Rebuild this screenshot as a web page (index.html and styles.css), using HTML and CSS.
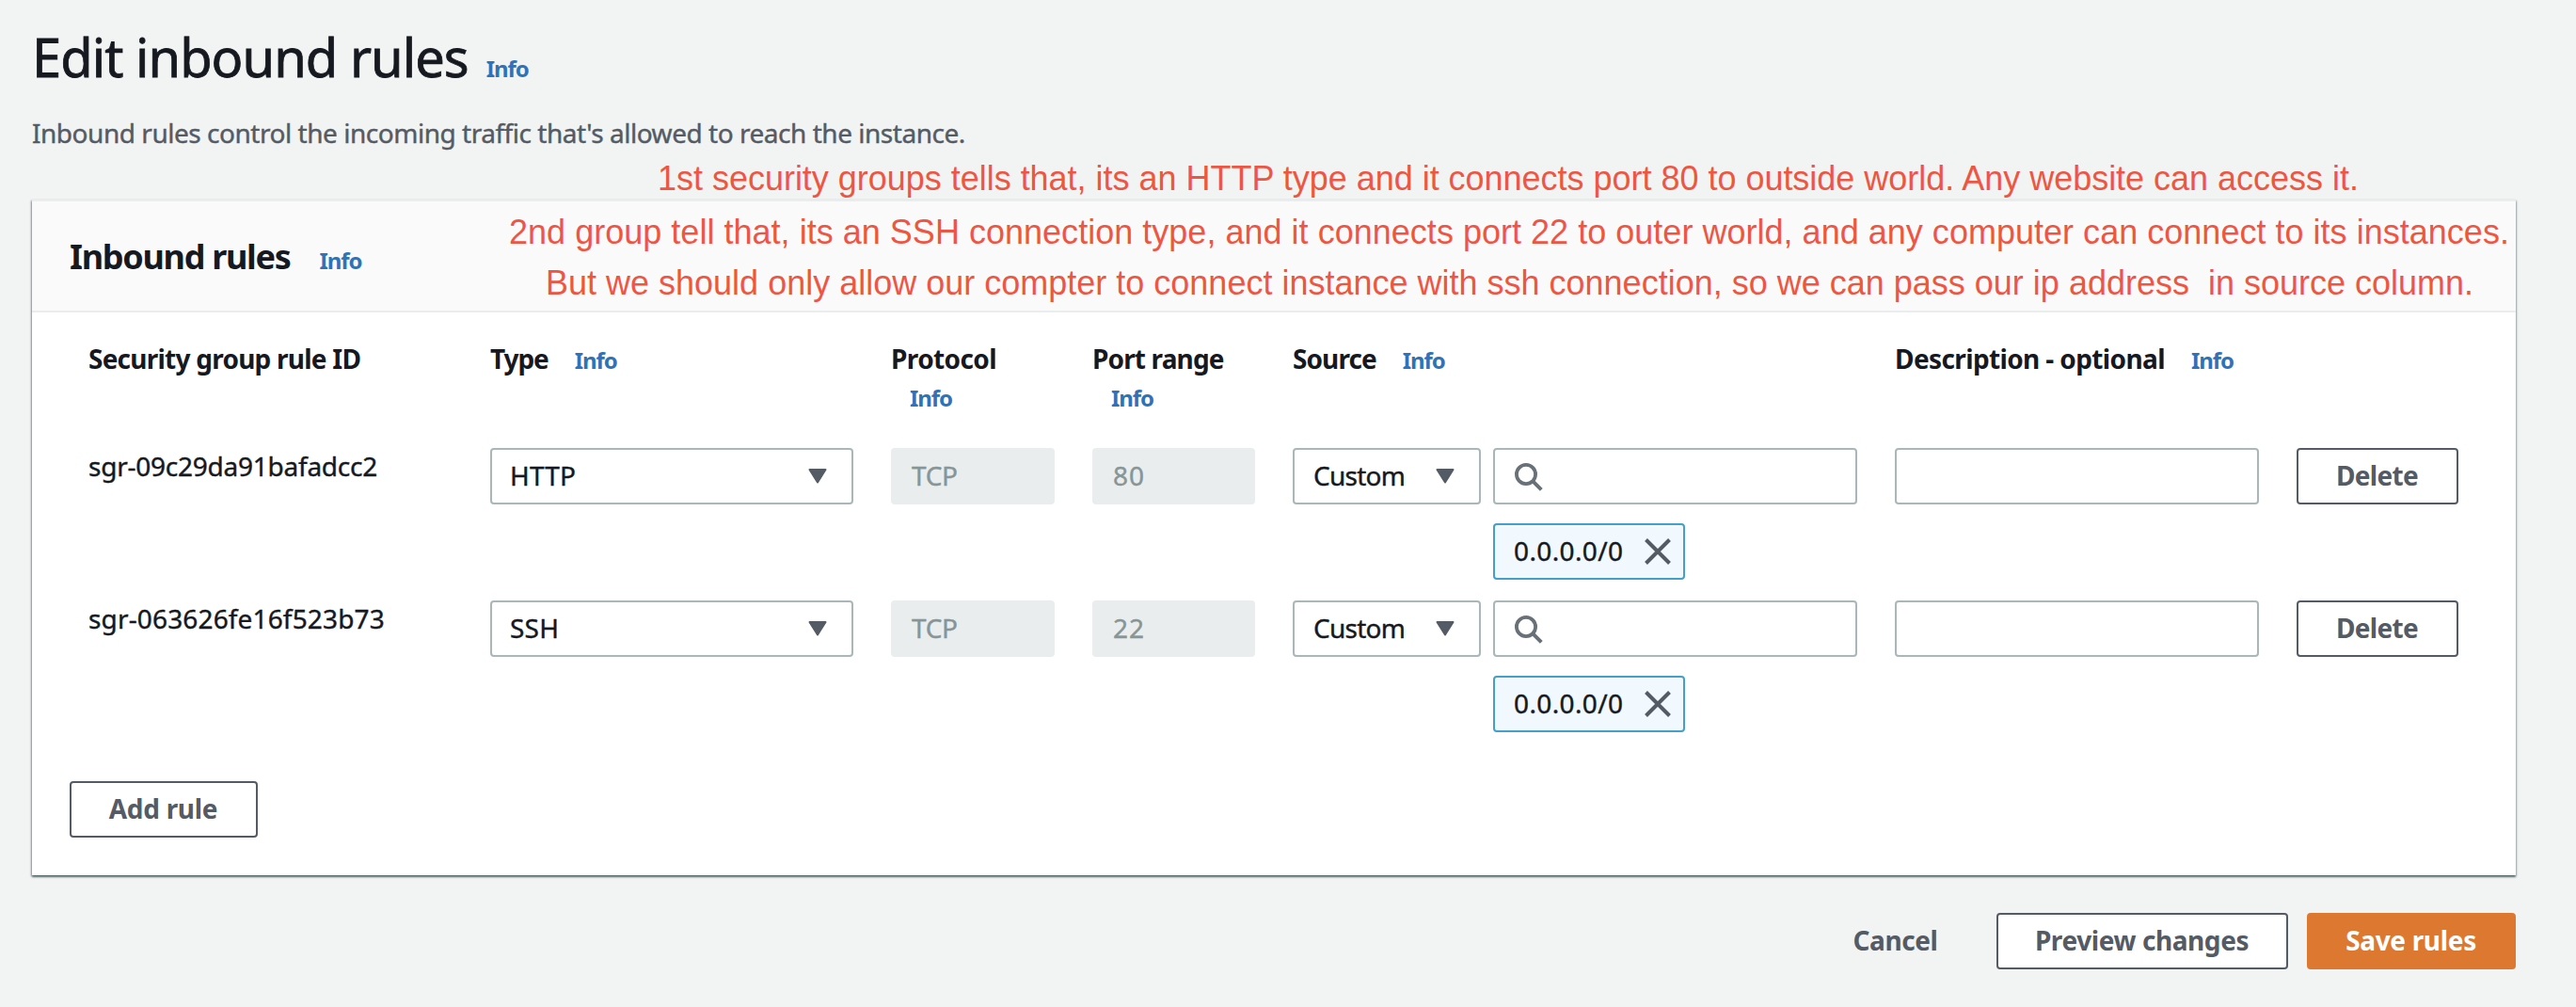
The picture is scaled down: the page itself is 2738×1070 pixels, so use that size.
FILE: index.html
```html
<!DOCTYPE html>
<html lang="en">
<head>
<meta charset="utf-8">
<title>Edit inbound rules</title>
<link rel="stylesheet" href="styles.css">
</head>
<body>
<svg class="sprite" aria-hidden="true">
  <symbol id="caret" viewBox="0 0 20 16"><path d="M1.5 1h17L10 14.5z" fill="#545b64" stroke="#545b64" stroke-width="2" stroke-linejoin="round"/></symbol>
  <symbol id="search" viewBox="0 0 30 30"><circle cx="12" cy="12" r="10.1" fill="none" stroke="#687078" stroke-width="3.8"/><path d="M19.3 19.3l9 9" stroke="#687078" stroke-width="4"/></symbol>
  <symbol id="close" viewBox="0 0 28 28"><path d="M1.5 1.5l25 25M26.5 1.5l-25 25" stroke="#545b64" stroke-width="4"/></symbol>
</svg>
<main class="page">
  <h1 class="title">Edit inbound rules<a class="info">Info</a></h1>
  <p class="lead">Inbound rules control the incoming traffic that's allowed to reach the instance.</p>

  <section class="card">
    <header class="card-header">
      <h2 class="card-title">Inbound rules<a class="info">Info</a></h2>
    </header>
    <div class="card-body">
      <div class="grid head">
        <div class="th th-id">Security group rule ID</div>
        <div class="th th-type">Type<a class="info">Info</a></div>
        <div class="th">Protocol<br><a class="info wrapped">Info</a></div>
        <div class="th th-port">Port range<br><a class="info wrapped">Info</a></div>
        <div class="th th-source">Source<a class="info">Info</a></div>
        <div class="th th-description">Description - optional<a class="info">Info</a></div>
      </div>

      <div class="grid rule">
        <div class="rule-id">sgr-09c29da91bafadcc2</div>
        <div class="box select"><span class="code">HTTP</span><svg class="caret"><use href="#caret"/></svg></div>
        <div class="box disabled">TCP</div>
        <div class="box disabled number">80</div>
        <div class="source">
          <div class="box select"><span class="custom">Custom</span><svg class="caret"><use href="#caret"/></svg></div>
          <div class="source-value">
            <div class="box"><svg class="search"><use href="#search"/></svg></div>
            <div class="box token"><span class="cidr">0.0.0.0/0</span><svg class="close"><use href="#close"/></svg></div>
          </div>
        </div>
        <div class="box"></div>
        <button class="btn delete">Delete</button>
      </div>

      <div class="grid rule">
        <div class="rule-id second">sgr-063626fe16f523b73</div>
        <div class="box select"><span class="code">SSH</span><svg class="caret"><use href="#caret"/></svg></div>
        <div class="box disabled">TCP</div>
        <div class="box disabled number">22</div>
        <div class="source">
          <div class="box select"><span class="custom">Custom</span><svg class="caret"><use href="#caret"/></svg></div>
          <div class="source-value">
            <div class="box"><svg class="search"><use href="#search"/></svg></div>
            <div class="box token"><span class="cidr">0.0.0.0/0</span><svg class="close"><use href="#close"/></svg></div>
          </div>
        </div>
        <div class="box"></div>
        <button class="btn delete">Delete</button>
      </div>

      <button class="btn add">Add rule</button>
    </div>
  </section>

  <footer class="actions">
    <button class="btn link">Cancel</button>
    <button class="btn preview">Preview changes</button>
    <button class="btn primary">Save rules</button>
  </footer>

  <p class="note note-1">1st security groups tells that, its an HTTP type and it connects port 80 to outside world. Any website can access it.</p>
  <p class="note note-2">2nd group tell that, its an SSH connection type, and it connects port 22 to outer world, and any computer can connect to its instances.</p>
  <p class="note note-3">But we should only allow our compter to connect instance with ssh connection, so we can pass our ip address&nbsp; in source column.</p>
</main>
</body>
</html>
```
FILE: styles.css
```css
* { box-sizing: border-box; }
body {
  margin: 0;
  background: #f2f3f3;
  color: #16191f;
  font: 28px/40px "Noto Sans", sans-serif;
}
h1, h2, p { margin: 0; }
.sprite { position: absolute; width: 0; height: 0; }
svg { display: block; flex: none; }

.page {
  position: relative;
  min-height: 1070px;
  padding: 28px 64px 40px 34px;
}
.title {
  font-size: 56px;
  line-height: 64px;
  font-weight: 400;
  letter-spacing: -0.96px;
  -webkit-text-stroke: 0.8px;
}
.info {
  color: #2e73b8;
  font-size: 24px;
  line-height: 1;
  font-weight: 700;
  letter-spacing: -1.07px;
  margin-left: 28px;
  -webkit-text-stroke: 0;
}
.title .info { margin-left: 19px; }
.lead {
  margin-top: 27px;
  line-height: 44px;
  color: #545b64;
  letter-spacing: -0.47px;
  -webkit-text-stroke: 0.4px;
}

.card {
  margin-top: 49px;
  background: #fff;
  border-top: 2px solid #eaeded;
  box-shadow: 0 2px 2px 0 rgba(0, 28, 36, .5), 1px 1px 2px 0 rgba(0, 28, 36, .18), -1px 1px 2px 0 rgba(0, 28, 36, .3);
}
.card-header {
  height: 118px;
  padding: 39px 40px 37px;
  background: #fafafa;
  border-bottom: 2px solid #eaeded;
}
.card-title {
  font-size: 36px;
  line-height: 40px;
  letter-spacing: -1.3px;
}
.card-title .info { margin-left: 31px; }
.card-body { padding: 29px 60px 40px; }

.grid {
  display: grid;
  grid-template-columns: 387px 386px 174px 173px 600px 387px 172px;
  column-gap: 40px;
  align-items: start;
}
.th { font-weight: 700; letter-spacing: -0.6px; }
.th-id { letter-spacing: -0.76px; }
.th-type { letter-spacing: -1.09px; }
.th-port { letter-spacing: -0.85px; }
.th-source { letter-spacing: -0.91px; }
.th-description { letter-spacing: -0.62px; }
.th .wrapped { margin-left: 20px; }

.rule { margin-top: 22px; height: 140px; }
.head + .rule { margin-top: 35px; }
.rule-id { line-height: 38px; letter-spacing: -0.24px; -webkit-text-stroke: 0.4px; }
.rule-id.second { letter-spacing: 0.15px; }

.box, .btn {
  height: 60px;
  border: 2px solid #aab7b8;
  border-radius: 4px;
  background: #fff;
  padding: 0 20px 2px;
  display: flex;
  align-items: center;
}
.box { -webkit-text-stroke: 0.4px; }
.select { justify-content: space-between; padding-right: 26px; }
.caret { width: 20px; height: 16px; margin-top: 2px; }
.search { width: 30px; height: 30px; margin: 3px 0 0 1px; }
.close { width: 28px; height: 28px; margin-top: 2px; }
.code { letter-spacing: 0.2px; margin-left: -1px; }
.custom { letter-spacing: -0.75px; }
.disabled {
  background: #eaeded;
  border-color: #eaeded;
  color: #879596;
  letter-spacing: -0.35px;
}
.number { letter-spacing: 1px; }
.source { display: grid; grid-template-columns: 200px 387px; column-gap: 13px; }
.source-value { display: flex; flex-direction: column; align-items: stretch; gap: 20px; }
.token {
  width: 204px;
  border-color: #44a0c8;
  background: #f2f9fe;
  justify-content: space-between;
  padding-right: 13px;
}
.cidr { letter-spacing: 0.38px; }

.btn {
  font: 700 28px/40px "Noto Sans", sans-serif;
  color: #545b64;
  border-color: #545b64;
  justify-content: center;
  padding: 0 1px 2px 0;
}
.delete { letter-spacing: -0.68px; width: 172px; }
.add { width: 200px; margin: 52px 0 0 -20px; letter-spacing: -0.3px; }

.actions {
  margin-top: 40px;
  display: flex;
  justify-content: flex-end;
  gap: 20px;
}
.link {
  background: transparent;
  border-color: transparent;
  width: 174px;
  letter-spacing: -0.42px;
}
.preview { width: 310px; letter-spacing: -0.41px; }
.primary {
  width: 222px;
  background: #dd7831;
  border-color: #dd7831;
  color: #fff;
  letter-spacing: -0.33px;
}

/* Annotations laid over the page */
.note {
  position: absolute;
  font: 36px/40px "Liberation Sans", Arial, sans-serif;
  color: #ee5644;
  white-space: nowrap;
}
.note-1 { left: 699px; top: 170px; letter-spacing: -0.02px; }
.note-2 { left: 541px; top: 227px; letter-spacing: 0.02px; }
.note-3 { left: 580px; top: 281px; }
```
